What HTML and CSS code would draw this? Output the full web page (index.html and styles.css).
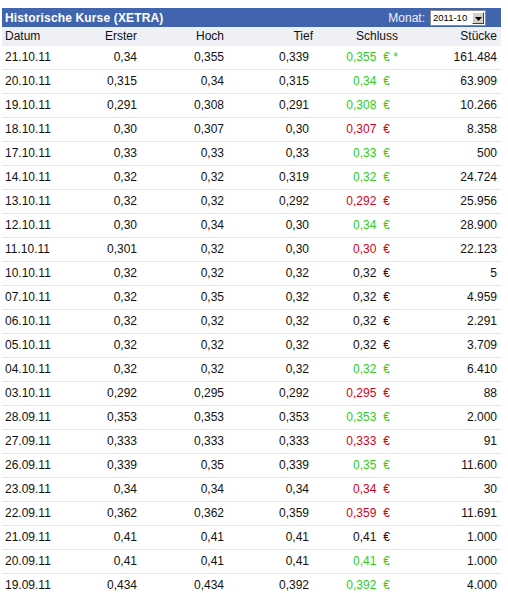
FILE: index.html
```html
<!DOCTYPE html>
<html lang="de">
<head>
<meta charset="utf-8">
<title>Historische Kurse (XETRA)</title>
<link rel="stylesheet" href="styles.css">
</head>
<body>
<div class="kurse">
  <div class="titlebar">
    <span class="title">Historische Kurse (XETRA)</span>
    <div class="monat">
      <span class="monat-label">Monat:</span>
      <div class="select">
        <span class="select-val">2011-10</span>
        <span class="select-btn"><svg width="7" height="4" viewBox="0 0 7 4"><path d="M0 0h7L3.5 4z" fill="#000"/></svg></span>
      </div>
    </div>
  </div>
  <div class="grid head">
    <div class="c-date">Datum</div>
    <div class="c-num">Erster</div>
    <div class="c-num">Hoch</div>
    <div class="c-num c-tief-h">Tief</div>
    <div class="c-num">Schluss</div>
    <div class="c-num">Stücke</div>
  </div>
  <div class="grid row"><div class="c-date">21.10.11</div><div class="c-num">0,34</div><div class="c-num">0,355</div><div class="c-num c-tief">0,339</div><div class="c-num up">0,355<span class="eur">€</span><span class="star">*</span></div><div class="c-num">161.484</div></div>
  <div class="grid row"><div class="c-date">20.10.11</div><div class="c-num">0,315</div><div class="c-num">0,34</div><div class="c-num c-tief">0,315</div><div class="c-num up">0,34<span class="eur">€</span><span class="star"></span></div><div class="c-num">63.909</div></div>
  <div class="grid row"><div class="c-date">19.10.11</div><div class="c-num">0,291</div><div class="c-num">0,308</div><div class="c-num c-tief">0,291</div><div class="c-num up">0,308<span class="eur">€</span><span class="star"></span></div><div class="c-num">10.266</div></div>
  <div class="grid row"><div class="c-date">18.10.11</div><div class="c-num">0,30</div><div class="c-num">0,307</div><div class="c-num c-tief">0,30</div><div class="c-num down">0,307<span class="eur">€</span><span class="star"></span></div><div class="c-num">8.358</div></div>
  <div class="grid row"><div class="c-date">17.10.11</div><div class="c-num">0,33</div><div class="c-num">0,33</div><div class="c-num c-tief">0,33</div><div class="c-num up">0,33<span class="eur">€</span><span class="star"></span></div><div class="c-num">500</div></div>
  <div class="grid row"><div class="c-date">14.10.11</div><div class="c-num">0,32</div><div class="c-num">0,32</div><div class="c-num c-tief">0,319</div><div class="c-num up">0,32<span class="eur">€</span><span class="star"></span></div><div class="c-num">24.724</div></div>
  <div class="grid row"><div class="c-date">13.10.11</div><div class="c-num">0,32</div><div class="c-num">0,32</div><div class="c-num c-tief">0,292</div><div class="c-num down">0,292<span class="eur">€</span><span class="star"></span></div><div class="c-num">25.956</div></div>
  <div class="grid row"><div class="c-date">12.10.11</div><div class="c-num">0,30</div><div class="c-num">0,34</div><div class="c-num c-tief">0,30</div><div class="c-num up">0,34<span class="eur">€</span><span class="star"></span></div><div class="c-num">28.900</div></div>
  <div class="grid row"><div class="c-date">11.10.11</div><div class="c-num">0,301</div><div class="c-num">0,32</div><div class="c-num c-tief">0,30</div><div class="c-num down">0,30<span class="eur">€</span><span class="star"></span></div><div class="c-num">22.123</div></div>
  <div class="grid row"><div class="c-date">10.10.11</div><div class="c-num">0,32</div><div class="c-num">0,32</div><div class="c-num c-tief">0,32</div><div class="c-num">0,32<span class="eur">€</span><span class="star"></span></div><div class="c-num">5</div></div>
  <div class="grid row"><div class="c-date">07.10.11</div><div class="c-num">0,32</div><div class="c-num">0,35</div><div class="c-num c-tief">0,32</div><div class="c-num">0,32<span class="eur">€</span><span class="star"></span></div><div class="c-num">4.959</div></div>
  <div class="grid row"><div class="c-date">06.10.11</div><div class="c-num">0,32</div><div class="c-num">0,32</div><div class="c-num c-tief">0,32</div><div class="c-num">0,32<span class="eur">€</span><span class="star"></span></div><div class="c-num">2.291</div></div>
  <div class="grid row"><div class="c-date">05.10.11</div><div class="c-num">0,32</div><div class="c-num">0,32</div><div class="c-num c-tief">0,32</div><div class="c-num">0,32<span class="eur">€</span><span class="star"></span></div><div class="c-num">3.709</div></div>
  <div class="grid row"><div class="c-date">04.10.11</div><div class="c-num">0,32</div><div class="c-num">0,32</div><div class="c-num c-tief">0,32</div><div class="c-num up">0,32<span class="eur">€</span><span class="star"></span></div><div class="c-num">6.410</div></div>
  <div class="grid row"><div class="c-date">03.10.11</div><div class="c-num">0,292</div><div class="c-num">0,295</div><div class="c-num c-tief">0,292</div><div class="c-num down">0,295<span class="eur">€</span><span class="star"></span></div><div class="c-num">88</div></div>
  <div class="grid row"><div class="c-date">28.09.11</div><div class="c-num">0,353</div><div class="c-num">0,353</div><div class="c-num c-tief">0,353</div><div class="c-num up">0,353<span class="eur">€</span><span class="star"></span></div><div class="c-num">2.000</div></div>
  <div class="grid row"><div class="c-date">27.09.11</div><div class="c-num">0,333</div><div class="c-num">0,333</div><div class="c-num c-tief">0,333</div><div class="c-num down">0,333<span class="eur">€</span><span class="star"></span></div><div class="c-num">91</div></div>
  <div class="grid row"><div class="c-date">26.09.11</div><div class="c-num">0,339</div><div class="c-num">0,35</div><div class="c-num c-tief">0,339</div><div class="c-num up">0,35<span class="eur">€</span><span class="star"></span></div><div class="c-num">11.600</div></div>
  <div class="grid row"><div class="c-date">23.09.11</div><div class="c-num">0,34</div><div class="c-num">0,34</div><div class="c-num c-tief">0,34</div><div class="c-num down">0,34<span class="eur">€</span><span class="star"></span></div><div class="c-num">30</div></div>
  <div class="grid row"><div class="c-date">22.09.11</div><div class="c-num">0,362</div><div class="c-num">0,362</div><div class="c-num c-tief">0,359</div><div class="c-num down">0,359<span class="eur">€</span><span class="star"></span></div><div class="c-num">11.691</div></div>
  <div class="grid row"><div class="c-date">21.09.11</div><div class="c-num">0,41</div><div class="c-num">0,41</div><div class="c-num c-tief">0,41</div><div class="c-num">0,41<span class="eur">€</span><span class="star"></span></div><div class="c-num">1.000</div></div>
  <div class="grid row"><div class="c-date">20.09.11</div><div class="c-num">0,41</div><div class="c-num">0,41</div><div class="c-num c-tief">0,41</div><div class="c-num up">0,41<span class="eur">€</span><span class="star"></span></div><div class="c-num">1.000</div></div>
  <div class="grid row"><div class="c-date">19.09.11</div><div class="c-num">0,434</div><div class="c-num">0,434</div><div class="c-num c-tief">0,392</div><div class="c-num up">0,392<span class="eur">€</span><span class="star"></span></div><div class="c-num">4.000</div></div>
</div>
</body>
</html>
```
FILE: styles.css
```css
html, body {
  margin: 0;
  padding: 0;
  background: #fff;
}
body {
  font-family: "Liberation Sans", Arial, sans-serif;
  font-size: 12px;
  color: #111;
}
.kurse {
  width: 499px;
  margin: 8px 0 0 2px;
}
.titlebar {
  height: 19px;
  background: #4064ad;
  display: flex;
  align-items: center;
  justify-content: space-between;
  padding: 0 15px 0 3px;
}
.title {
  color: #fff;
  font-weight: bold;
  font-size: 12px;
  letter-spacing: 0.15px;
}
.monat {
  display: flex;
  align-items: center;
  gap: 5px;
}
.monat-label {
  color: #eef2fa;
}
.select {
  display: flex;
  align-items: center;
  justify-content: space-between;
  width: 54px;
  height: 14px;
  background: #fff;
  border: 1px solid #8a8a8a;
}
.select-val {
  font-size: 9.5px;
  color: #000;
  padding-left: 2px;
  line-height: 14px;
}
.select-btn {
  width: 12px;
  height: 12px;
  margin-right: 1px;
  background: #d4d0c8;
  border-top: 1px solid #fff;
  border-left: 1px solid #fff;
  border-right: 1px solid #404040;
  border-bottom: 1px solid #404040;
  box-sizing: border-box;
  display: flex;
  align-items: flex-end;
  justify-content: center;
  padding-bottom: 2px;
}
.select-btn svg {
  display: block;
}
.grid {
  display: grid;
  grid-template-columns: 88px 47px 87px 89px 85px 99px;
  padding-right: 4px;
  white-space: nowrap;
}
.head {
  height: 19px;
  line-height: 19px;
  background: #eef0f5;
}
.row {
  height: 23px;
  line-height: 23px;
  border-bottom: 1px solid #e6e6e6;
}
.c-date {
  padding-left: 3px;
}
.c-num {
  text-align: right;
}
.c-tief {
  padding-right: 4px;
}
.up {
  color: #2ecc1e;
}
.down {
  color: #d0021b;
}
.eur {
  margin-left: 7px;
}
.star {
  display: inline-block;
  width: 8px;
  text-align: right;
}
```
